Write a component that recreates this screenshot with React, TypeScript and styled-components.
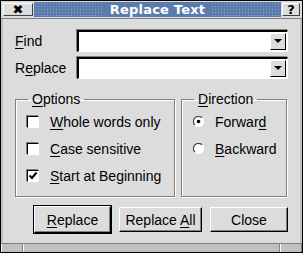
import React from 'react';
import styled, { createGlobalStyle } from 'styled-components';

const Global = createGlobalStyle`
  html, body { margin: 0; padding: 0; background: #dcdcdc; }
  body { font-family: "Liberation Sans", Arial, sans-serif; font-size: 14px; color: #000; }
`;

const Window = styled.div`
  width: 303px;
  height: 253px;
  box-sizing: border-box;
  display: flex;
  flex-direction: column;
  background: #dcdcdc;
  border: 1px solid #000;
`;

const TitleBar = styled.div`
  height: 17px;
  display: flex;
  align-items: center;
  gap: 1px;
  padding: 0 2px;
  background: #dcdcdc;
  border-bottom: 1px solid #808080;
`;

const FrameButton = styled.div<{ $w: number }>`
  width: ${(p) => p.$w}px;
  height: 13px;
  box-sizing: border-box;
  display: flex;
  align-items: center;
  justify-content: center;
  background: #dcdcdc;
  border: 1px solid;
  border-color: #fff #404040 #404040 #fff;
  font: bold 13px "DejaVu Sans", sans-serif;
`;

const TitleStrip = styled.div`
  flex: 1;
  height: 15px;
  display: flex;
  align-items: center;
  justify-content: center;
  background-color: #5a7bab;
  background-image: radial-gradient(circle, #8aa4cc 0.7px, transparent 0.8px);
  background-size: 3px 3px;
`;

const TitleText = styled.span`
  font: bold 13px "DejaVu Sans", sans-serif;
  color: #fff;
  background: #5a7bab;
  padding: 0 6px;
  letter-spacing: 0.2px;
`;

const Body = styled.div`
  flex: 1;
  display: flex;
  flex-direction: column;
  padding: 11px 12px 0 12px;
  border-left: 2px solid #c0c0c0;
  border-right: 2px solid #c0c0c0;
`;

const FieldRow = styled.div`
  display: flex;
  align-items: center;
  height: 22px;
  margin-bottom: 5px;
`;

const Label = styled.span`
  width: 62px;
`;

const Combo = styled.div`
  flex: 1;
  height: 22px;
  box-sizing: border-box;
  background: #fff;
  border-top: 2px solid #000;
  border-left: 2px solid #000;
  border-bottom: 1px solid #fff;
  border-right: 1px solid #fff;
  box-shadow: -1px -1px 0 #808080;
  display: flex;
  justify-content: flex-end;
  padding: 1px;
`;

const ComboButton = styled.div`
  width: 16px;
  height: 17px;
  box-sizing: border-box;
  background: #dcdcdc;
  border: 1px solid;
  border-color: #fff #000 #000 #fff;
  display: flex;
  align-items: center;
  justify-content: center;
`;

const GroupRow = styled.div`
  display: flex;
  gap: 6px;
  margin-top: 8px;
`;

const Group = styled.fieldset<{ $w: number }>`
  width: ${(p) => p.$w}px;
  height: 105px;
  box-sizing: border-box;
  margin: 0;
  padding: 7px 0 0 10px;
  border: 1px solid #808080;
  box-shadow: inset 1px 1px 0 #fff, 1px 1px 0 #fff;
  display: flex;
  flex-direction: column;
  gap: 10px;
`;

const Legend = styled.legend`
  padding: 0 4px;
  margin-left: 2px;
  line-height: 14px;
`;

const Option = styled.div`
  display: flex;
  align-items: center;
  height: 17px;
`;

const CheckBox = styled.div`
  width: 12px;
  height: 12px;
  box-sizing: border-box;
  background: #fff;
  border: 1px solid;
  border-color: #000 #fff #fff #000;
  box-shadow: -1px -1px 0 #808080;
  margin: 0 11px 0 1px;
  display: flex;
  align-items: center;
  justify-content: center;
`;

const Radio = styled.div`
  width: 11px;
  height: 11px;
  margin: 0 11px 0 1px;
  display: flex;
`;

const U = styled.span`
  text-decoration: underline;
  text-underline-offset: 2px;
`;

const ButtonRow = styled.div`
  display: flex;
  justify-content: flex-end;
  gap: 8px;
  margin-top: 9px;
`;

const Button = styled.div<{ $w: number; $default?: boolean }>`
  width: ${(p) => p.$w}px;
  height: ${(p) => (p.$default ? 27 : 25)}px;
  margin-top: ${(p) => (p.$default ? 0 : 1)}px;
  box-sizing: border-box;
  display: flex;
  align-items: center;
  justify-content: center;
  background: #dcdcdc;
  border: 1px solid;
  border-color: #fff #000 #000 #fff;
  box-shadow: inset -1px -1px 0 #808080;
  outline: ${(p) => (p.$default ? '1px solid #000' : 'none')};
  outline-offset: 0;
`;

const BottomFrame = styled.div`
  height: 8px;
  margin-top: auto;
  display: flex;
  border-top: 1px solid #808080;
  background: #c0c0c0;
`;

const Handle = styled.div<{ $w?: number }>`
  width: ${(p) => (p.$w ? `${p.$w}px` : 'auto')};
  flex: ${(p) => (p.$w ? 'none' : 1)};
  border-left: 1px solid #fff;
  border-right: 1px solid #808080;
`;

const Arrow = () => (
  <svg width="8" height="5" viewBox="0 0 8 5">
    <polygon points="0,0 8,0 4,4" fill="#000" />
  </svg>
);

const Check = () => (
  <svg width="10" height="10" viewBox="0 0 10 10">
    <path d="M1.5 4.5 L4 7 L8.5 1.5" stroke="#000" strokeWidth="2" fill="none" />
  </svg>
);

const RadioIcon = ({ on }: { on?: boolean }) => (
  <svg width="11" height="11" viewBox="0 0 11 11">
    <circle cx="5.5" cy="5.5" r="5" fill="#fff" />
    <path d="M1.9 9.1 A5 5 0 0 1 9.1 1.9" stroke="#404040" strokeWidth="1.2" fill="none" />
    <path d="M9.1 1.9 A5 5 0 0 1 1.9 9.1" stroke="#fff" strokeWidth="1.2" fill="none" />
    {on && <circle cx="5.5" cy="5.5" r="1.8" fill="#000" />}
  </svg>
);

export default function App() {
  return (
    <>
      <Global />
      <Window>
        <TitleBar>
          <FrameButton $w={30}>✖</FrameButton>
          <TitleStrip>
            <TitleText>Replace Text</TitleText>
          </TitleStrip>
          <FrameButton $w={18}>?</FrameButton>
        </TitleBar>
        <Body>
          <FieldRow>
            <Label><U>F</U>ind</Label>
            <Combo><ComboButton><Arrow /></ComboButton></Combo>
          </FieldRow>
          <FieldRow>
            <Label>R<U>e</U>place</Label>
            <Combo><ComboButton><Arrow /></ComboButton></Combo>
          </FieldRow>
          <GroupRow>
            <Group $w={160}>
              <Legend><U>O</U>ptions</Legend>
              <Option><CheckBox /><span><U>W</U>hole words only</span></Option>
              <Option><CheckBox /><span><U>C</U>ase sensitive</span></Option>
              <Option><CheckBox><Check /></CheckBox><span><U>S</U>tart at Beginning</span></Option>
            </Group>
            <Group $w={106}>
              <Legend><U>D</U>irection</Legend>
              <Option><Radio><RadioIcon on /></Radio><span>Forwar<U>d</U></span></Option>
              <Option><Radio><RadioIcon /></Radio><span><U>B</U>ackward</span></Option>
            </Group>
          </GroupRow>
          <ButtonRow>
            <Button $w={77} $default><span><U>R</U>eplace</span></Button>
            <Button $w={83}><span>Replace <U>A</U>ll</span></Button>
            <Button $w={78}>Close</Button>
          </ButtonRow>
        </Body>
        <BottomFrame>
          <Handle $w={20} />
          <Handle />
          <Handle $w={20} />
        </BottomFrame>
      </Window>
    </>
  );
}
